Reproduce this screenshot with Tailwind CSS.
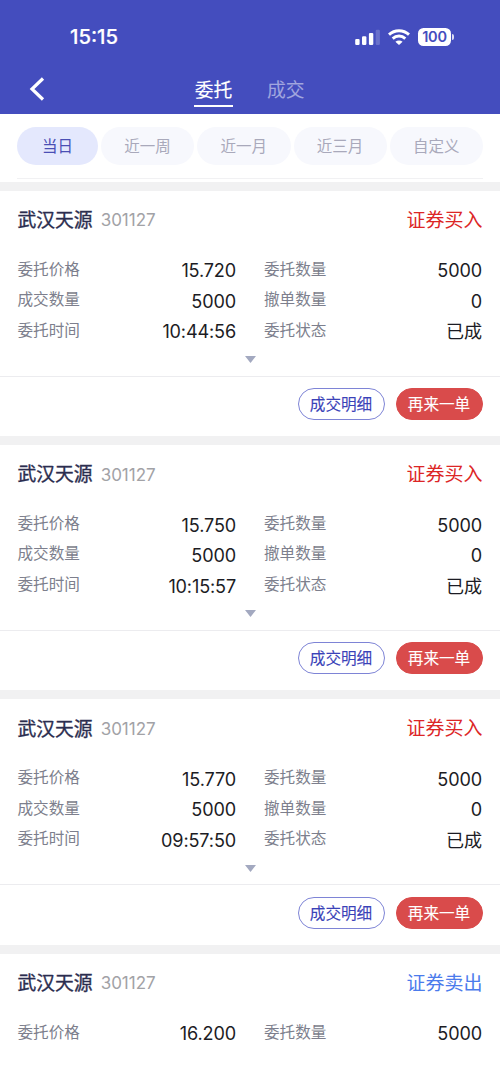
<!DOCTYPE html>
<html lang="zh-CN">
<head>
  <meta charset="UTF-8" />
  <meta name="viewport" content="width=device-width, initial-scale=1.0" />
  <title>委托</title>
  <script src="https://cdn.jsdelivr.net/npm/@tailwindcss/browser@4"></script>
</head>
<body class="bg-white font-[Inter,'Noto_Sans_CJK_SC',sans-serif]">
  <div class="w-[500px] h-[1087px] overflow-hidden flex flex-col">

    <header class="h-[114px] shrink-0 bg-[#444dbe] text-white flex flex-col">
      <!-- Status bar -->
      <div class="h-[64px] pt-[9px] pl-[70px] pr-[46px] flex items-center justify-between">
        <span class="pt-px text-[20.3px] font-medium [-webkit-text-stroke:0.2px]">15:15</span>
        <div class="flex items-center">
          <svg class="w-[26px] h-[16px]" viewBox="0 0 26 16" fill="currentColor">
            <rect x="0.2" y="9.9" width="4.4" height="6" rx="1.2" />
            <rect x="7" y="7.3" width="4.4" height="8.6" rx="1.2" />
            <rect x="13.9" y="3.9" width="4.4" height="12" rx="1.2" />
            <rect x="20.7" y="0.8" width="4.2" height="15.1" rx="1.2" opacity="0.2" />
          </svg>
          <svg class="ml-[7px] w-[22px] h-[16px]" viewBox="0 0 22 16" fill="none" stroke="currentColor" stroke-width="2.9">
            <path d="M1 5.6C6.6 0.4 15.4 0.4 21 5.6" />
            <path d="M4.7 9.6C8.3 6.2 13.7 6.2 17.3 9.6" />
            <path d="M11 16L7.4 12.8C9.5 11.1 12.5 11.1 14.6 12.8Z" fill="currentColor" stroke="none" />
          </svg>
          <div class="ml-[8px] w-[33px] h-[18px] rounded-[5.5px] bg-white text-[#444dbe] text-[14.5px] leading-[18px] font-semibold tracking-[-0.2px] text-center">100</div>
          <div class="ml-[1px] w-[2px] h-[6px] rounded-r-full bg-white/80"></div>
        </div>
      </div>
      <!-- Title tabs -->
      <div class="h-[50px] pl-[29px] flex">
        <svg class="mt-[12px] w-[17px] h-[26px]" viewBox="0 0 17 26" fill="none" stroke="white" stroke-width="3.2">
          <path d="M14 2.5L3 13L14 23.5" />
        </svg>
        <div class="ml-[148px] w-[39px] h-[43px] pt-[13px] border-b-2 border-white text-[18.8px] leading-[28px] text-center whitespace-nowrap [-webkit-text-stroke:0.15px]">委托</div>
        <div class="ml-[34px] pt-[13px] text-[18.8px] leading-[28px] text-white/50 whitespace-nowrap">成交</div>
      </div>
    </header>

    <!-- Date range filter -->
    <div class="h-[67.5px] shrink-0 px-[17px] pt-[13px]">
      <div class="flex gap-[3px] h-[52px] border-b border-[#f1f1f3] text-[15.5px] leading-[40px] text-[#a9a9bb] text-center">
        <div class="w-[81px] h-[38px] rounded-full bg-[#e4e8fd] text-[#4a4fb5]">当日</div>
        <div class="flex-1 h-[38px] rounded-full bg-[#f7f8fd]">近一周</div>
        <div class="flex-1 h-[38px] rounded-full bg-[#f7f8fd]">近一月</div>
        <div class="flex-1 h-[38px] rounded-full bg-[#f7f8fd]">近三月</div>
        <div class="flex-1 h-[38px] rounded-full bg-[#f7f8fd]">自定义</div>
      </div>
    </div>

    <main id="orders"></main>
  </div>

  <script>
    const orders = [
      { side: '证券买入', price: '15.720', time: '10:44:56' },
      { side: '证券买入', price: '15.750', time: '10:15:57' },
      { side: '证券买入', price: '15.770', time: '09:57:50' },
      { side: '证券卖出', price: '16.200' },
    ];

    function row(label, value) {
      return `
        <div class="flex items-center justify-between">
          <span class="text-[15.6px] text-[#7d7f8d] -mt-px">${label}</span>
          <span class="pt-[2px] text-[18.1px] tracking-[-0.15px] text-[#1c1c24]">${value}</span>
        </div>`;
    }

    // Rows and buttons that only a loaded order has
    function details(o) {
      return `
            ${row('成交数量', '5000')}
            ${row('撤单数量', '0')}
            ${row('委托时间', o.time)}
            ${row('委托状态', '已成')}`;
    }

    function footer() {
      return `
        <div class="h-[59px] pt-[11.5px] pr-[17.5px] flex justify-end gap-[11px] text-[15.6px] leading-[31.5px] text-center [-webkit-text-stroke:0.12px]">
          <div class="w-[87px] h-[32px] rounded-full border border-[#7e84d6] text-[#3a42b8]">成交明细</div>
          <div class="w-[87px] h-[32px] rounded-full border border-[#d94b4b] bg-[#d94b4b] text-white">再来一单</div>
        </div>`;
    }

    document.getElementById('orders').innerHTML = orders.map(o => `
      <section class="h-[254.35px] border-t-[9px] border-[#f1f1f2]">
        <div class="h-[186px] px-[17.5px] ${o.time ? 'border-b border-[#ececef]' : ''}">
          <div class="h-[60px] pt-px flex items-center">
            <span class="text-[18.8px] text-[#2b2d4f] [-webkit-text-stroke:0.35px]">武汉天源</span>
            <span class="ml-[8px] text-[17px] text-[#a2a2a6]">301127</span>
            <span class="ml-auto text-[19px] ${o.side === '证券买入' ? 'text-[#dc2626]' : 'text-[#4b7bec]'}">${o.side}</span>
          </div>
          <div class="mt-[4px] grid grid-cols-[218.5px_218px] gap-x-[28px] auto-rows-[30.5px]">
            ${row('委托价格', o.price)}
            ${row('委托数量', '5000')}
            ${o.time ? details(o) : ''}
          </div>
          ${o.time ? '<svg class="mx-auto mt-[10px] w-[11px] h-[7px]" viewBox="0 0 11 7"><path d="M0 0H11L5.5 7Z" fill="#a3a9c0" /></svg>' : ''}
        </div>
        ${o.time ? footer() : ''}
      </section>`).join('');
  </script>
</body>
</html>
